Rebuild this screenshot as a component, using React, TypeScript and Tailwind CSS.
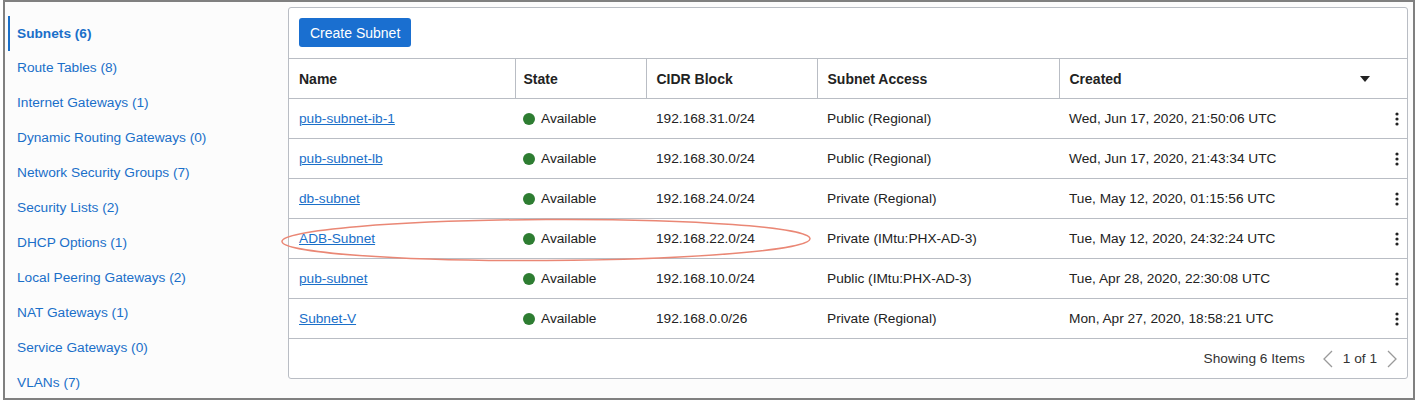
import React from "react"

interface Subnet {
  name: string
  cidr: string
  access: string
  created: string
}

const navItems = [
  "Subnets (6)",
  "Route Tables (8)",
  "Internet Gateways (1)",
  "Dynamic Routing Gateways (0)",
  "Network Security Groups (7)",
  "Security Lists (2)",
  "DHCP Options (1)",
  "Local Peering Gateways (2)",
  "NAT Gateways (1)",
  "Service Gateways (0)",
  "VLANs (7)",
]

const subnets: Subnet[] = [
  { name: "pub-subnet-ib-1", cidr: "192.168.31.0/24", access: "Public (Regional)", created: "Wed, Jun 17, 2020, 21:50:06 UTC" },
  { name: "pub-subnet-lb", cidr: "192.168.30.0/24", access: "Public (Regional)", created: "Wed, Jun 17, 2020, 21:43:34 UTC" },
  { name: "db-subnet", cidr: "192.168.24.0/24", access: "Private (Regional)", created: "Tue, May 12, 2020, 01:15:56 UTC" },
  { name: "ADB-Subnet", cidr: "192.168.22.0/24", access: "Private (IMtu:PHX-AD-3)", created: "Tue, May 12, 2020, 24:32:24 UTC" },
  { name: "pub-subnet", cidr: "192.168.10.0/24", access: "Public (IMtu:PHX-AD-3)", created: "Tue, Apr 28, 2020, 22:30:08 UTC" },
  { name: "Subnet-V", cidr: "192.168.0.0/26", access: "Private (Regional)", created: "Mon, Apr 27, 2020, 18:58:21 UTC" },
]

const Kebab = () => (
  <svg width="4" height="14" viewBox="0 0 4 14" className="fill-[#222]">
    <circle cx="2" cy="2" r="1.6" />
    <circle cx="2" cy="7" r="1.6" />
    <circle cx="2" cy="12" r="1.6" />
  </svg>
)

const Chevron = ({ dir }: { dir: "left" | "right" }) => (
  <svg width="10" height="18" viewBox="0 0 10 18" fill="none" stroke="#9a9a9a" strokeWidth="1.3">
    {dir === "left" ? <path d="M9 1 L1 9 L9 17" /> : <path d="M1 1 L9 9 L1 17" />}
  </svg>
)

export default function App() {
  return (
    <div
      className="w-[1420px] h-[405px] bg-white text-[13.7px] text-[#222]"
      style={{ fontFamily: '"Liberation Sans", Arial, sans-serif' }}
    >
      <div className="relative ml-[3px] w-[1412px] h-[400px] border-2 border-[#808080] bg-[#fcfcfc] flex">
        <nav className="w-[283px] pt-[14px] pl-[3px] shrink-0">
          {navItems.map((item, i) => (
            <div
              key={item}
              className={
                i === 0
                  ? "h-[35px] flex items-center pl-[7px] pt-[1px] border-l-2 border-[#1a6fc9] font-bold text-[#1a6fc9]"
                  : "h-[35px] flex items-center pl-[7px] border-l-2 border-transparent text-[#1a6fc9]"
              }
            >
              {item}
            </div>
          ))}
        </nav>

        <div className="mt-[5px] mr-[5px] h-[372px] flex-1 border border-[#b9bdc4] rounded-[3px] bg-white">
          <div className="h-[50px] pl-[10px] pt-[10px]">
            <button className="h-[29px] px-[11px] pt-[1px] rounded-[3px] bg-[#1a6fd0] text-white text-[14px]">
              Create Subnet
            </button>
          </div>
          <table className="w-full border-collapse table-fixed">
            <colgroup>
              <col className="w-[226px]" />
              <col className="w-[131px]" />
              <col className="w-[171px]" />
              <col className="w-[242px]" />
              <col />
            </colgroup>
            <thead>
              <tr className="h-[40px] border-y border-[#b9bdc4] text-left font-bold text-[14px]">
                <th className="pl-[10px] pt-[1px] border-r border-[#b9bdc4]">Name</th>
                <th className="pl-[8px] pt-[1px] border-r border-[#b9bdc4]">State</th>
                <th className="pl-[10px] pt-[1px] border-r border-[#b9bdc4]">CIDR Block</th>
                <th className="pl-[10px] pt-[1px] border-r border-[#b9bdc4]">Subnet Access</th>
                <th className="pl-[10px] pt-[1px]">
                  <div className="flex items-center justify-between pr-[37px]">
                    <span>Created</span>
                    <svg width="10" height="6" viewBox="0 0 10 6" className="fill-[#222]">
                      <path d="M0 0 H10 L5 6 Z" />
                    </svg>
                  </div>
                </th>
              </tr>
            </thead>
            <tbody>
              {subnets.map((s) => (
                <tr key={s.name} className="h-[40px] border-b border-[#b9bdc4]">
                  <td className="pl-[10px] pt-[1px]">
                    <a href="#" className="text-[#1a6fc9] underline">
                      {s.name}
                    </a>
                  </td>
                  <td className="pl-[8px] pt-[1px]">
                    <span className="flex items-center gap-[6px]">
                      <span className="w-[12px] h-[12px] rounded-full bg-[#2e7d32]" />
                      Available
                    </span>
                  </td>
                  <td className="pl-[10px] pt-[1px]">{s.cidr}</td>
                  <td className="pl-[10px] pt-[1px]">{s.access}</td>
                  <td className="pl-[10px] pt-[1px]">
                    <div className="flex items-center justify-between pr-[8px]">
                      <span>{s.created}</span>
                      <Kebab />
                    </div>
                  </td>
                </tr>
              ))}
            </tbody>
          </table>
          <div className="h-[40px] flex items-center justify-end pr-[10px] text-[#333]">
            <span className="mr-[18px]">Showing 6 Items</span>
            <Chevron dir="left" />
            <span className="mx-[10px]">1 of 1</span>
            <Chevron dir="right" />
          </div>
        </div>

        <svg
          className="absolute left-[273px] top-[214px] pointer-events-none"
          width="540"
          height="50"
          viewBox="0 0 540 50"
          fill="none"
        >
          <ellipse cx="268" cy="24" rx="264" ry="20.5" stroke="#ea8775" strokeWidth="1.5" transform="rotate(-0.3 268 24)" />
        </svg>
      </div>
    </div>
  )
}
